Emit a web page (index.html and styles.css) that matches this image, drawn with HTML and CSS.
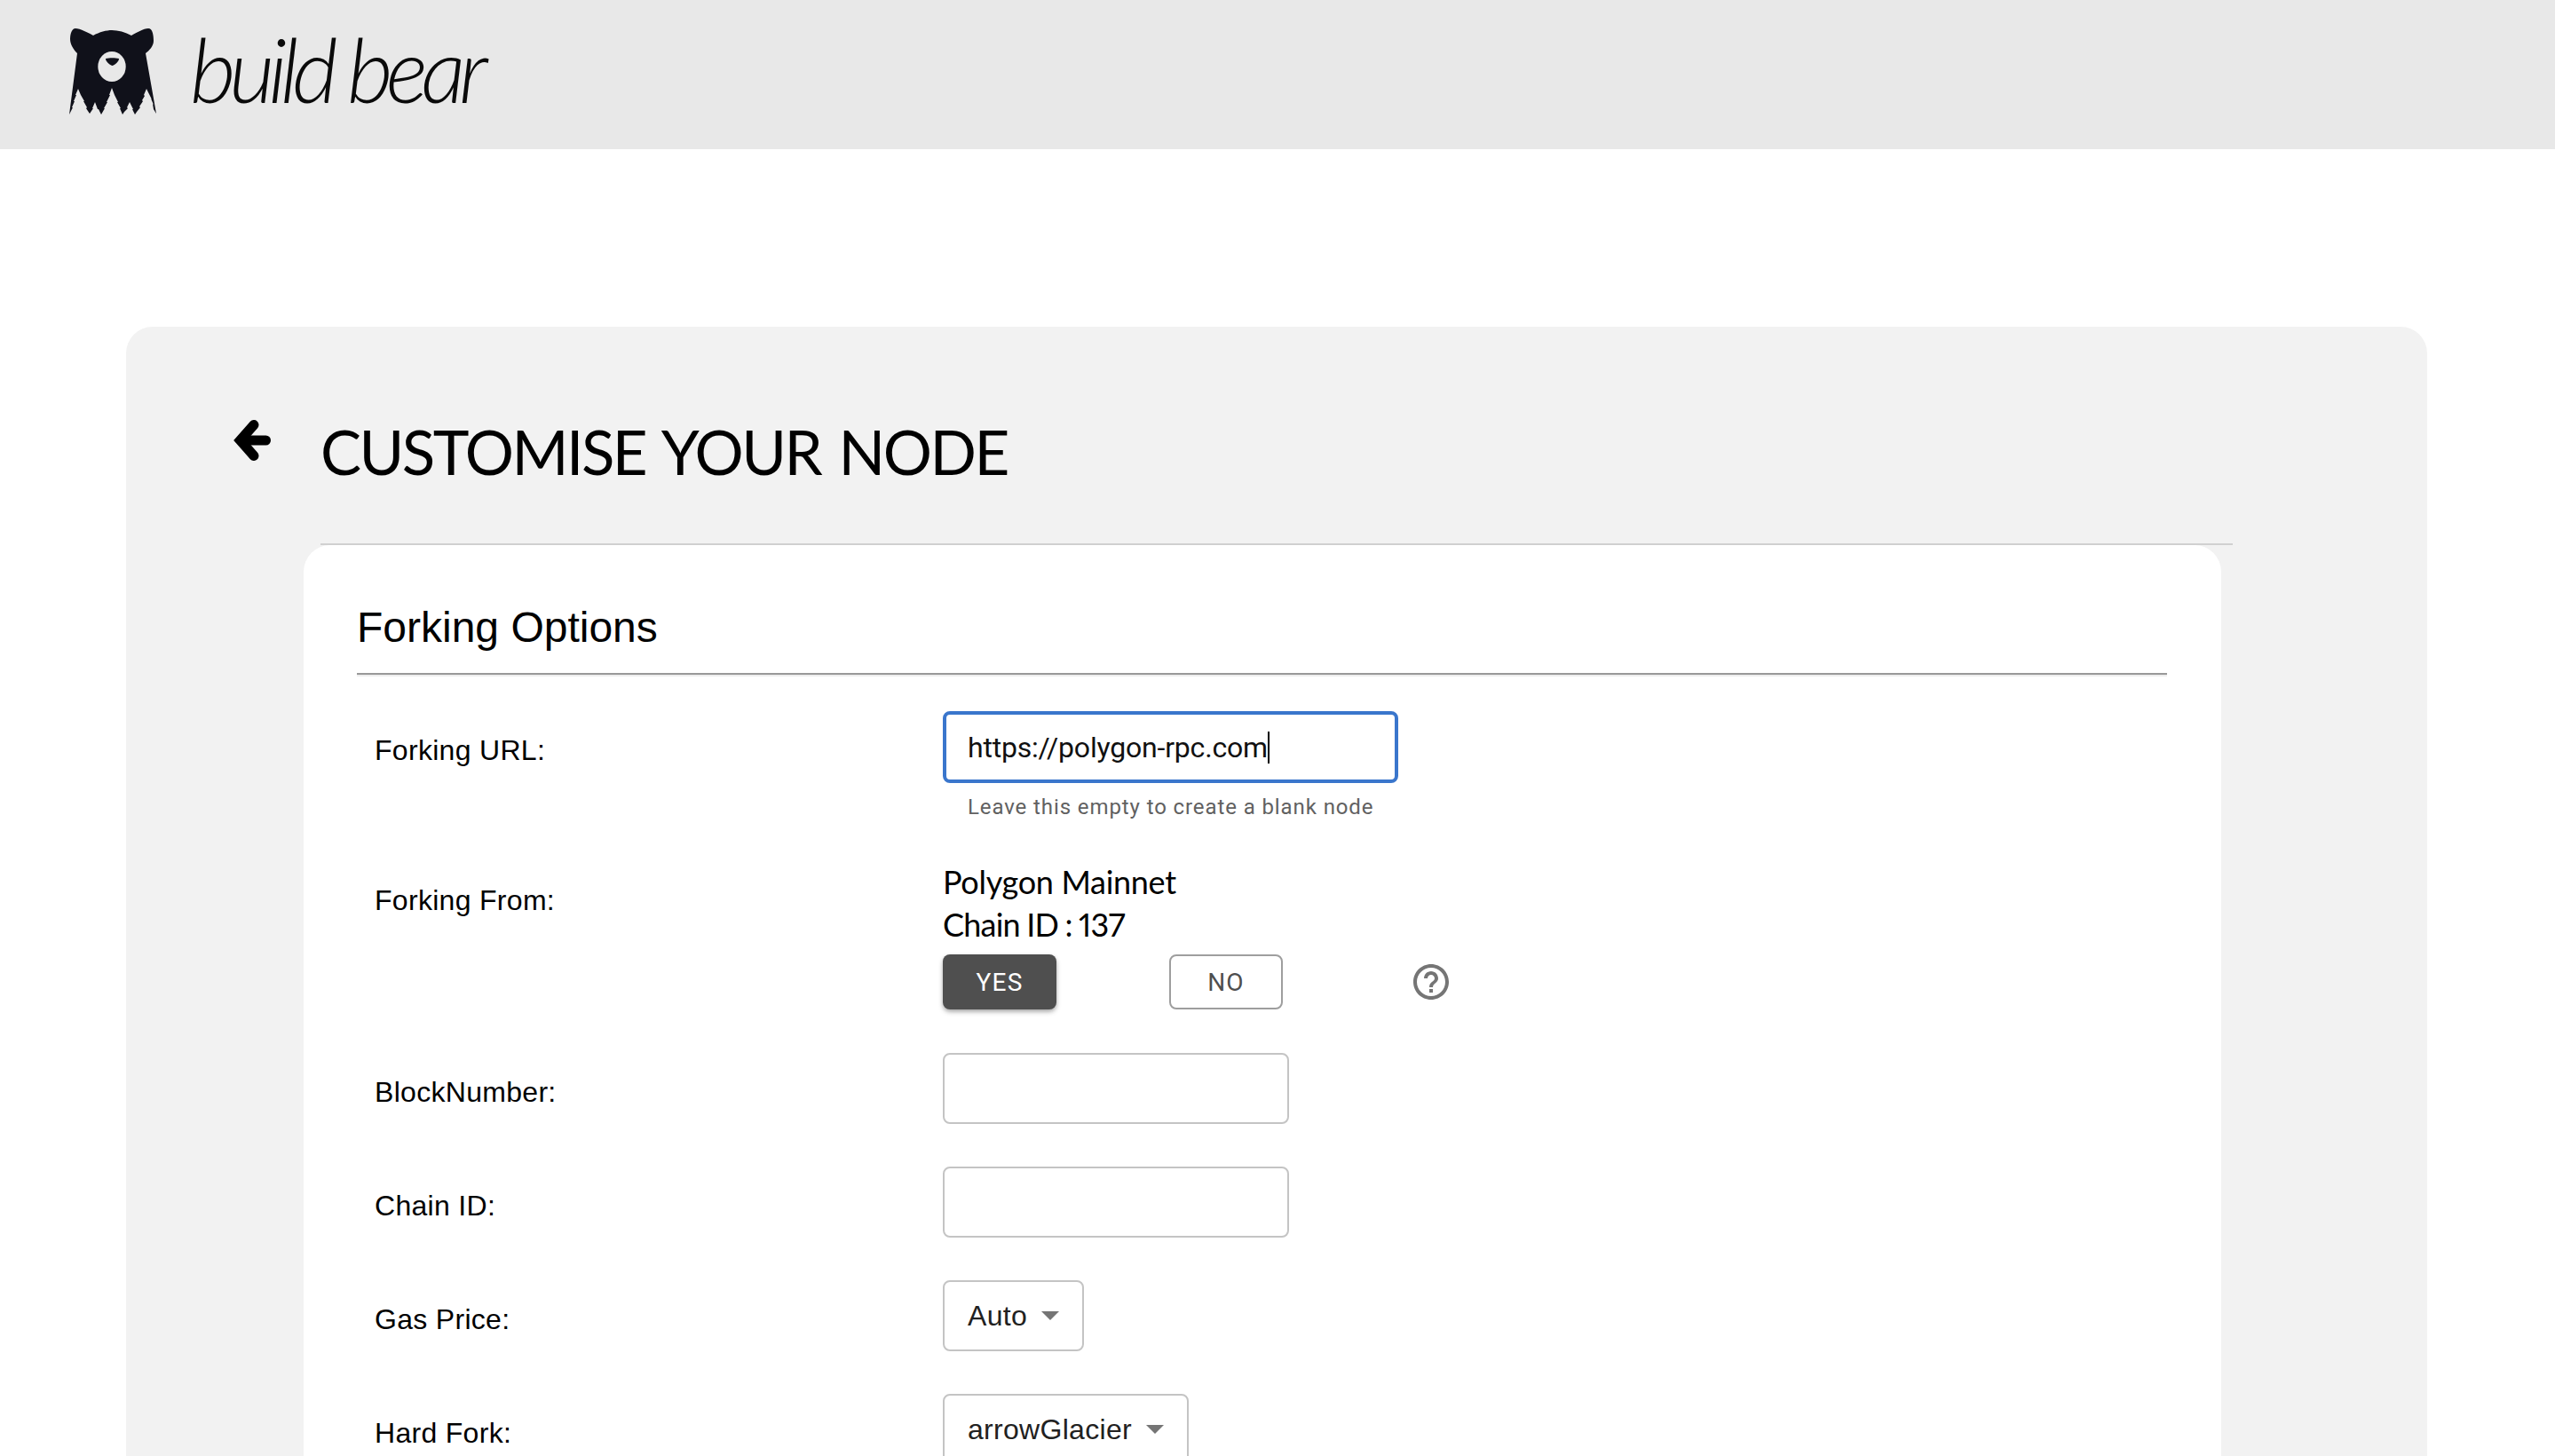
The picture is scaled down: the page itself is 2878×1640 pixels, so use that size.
FILE: index.html
```html
<!DOCTYPE html>
<html lang="en">
<head>
<meta charset="utf-8">
<title>BuildBear</title>
<link rel="stylesheet" href="styles.css">
</head>
<body>
<div class="page">
  <header class="topbar">
    <svg class="bear" viewBox="0 0 140 120" aria-label="BuildBear logo">
      <path class="bear-body" d="M25 12C30 12 40 17 45 20C52 16 60 14 66 14C73 14 81 16 88 20C93 17 102 12 107 12C112 12 113 20 113 26C113 32 108 37 104 40L116 108L113 103L112 97L113 98L110 91L111 92L108 86L105 80L102 87L103 88L100 93L101 94L97 100L98 101L94 106L92 109L89 103L90 103L86 95L83 101L84 102L80 106L78 109L75 102L76 102L72 95L73 95L69 87L66 79L63 87L64 87L60 95L61 95L57 102L58 102L54 109L51 103L50 103L47 95L44 102L45 102L41 108L37 102L38 101L34 94L35 94L31 87L28 80L25 87L26 87L23 94L24 94L21 101L22 101L18 109L27 40C23 36 19 30 19 24C19 18 21 12 25 12Z"/>
      <ellipse class="bear-face" cx="66" cy="55" rx="15.7" ry="17"/>
      <path class="bear-body" d="M59 46C63 45 70 45 74 46C74 49 70 53 66.500 54C63 53 59 49 59 46Z"/>
    </svg>
    <span class="wordmark">build bear</span>
  </header>
  <main class="panel">
    <div class="title-row">
      <svg class="back" viewBox="12 13 44 46" aria-label="Back">
        <path class="back-head" d="M36 18.500L20.500 36L36 53.500"/>
        <path class="back-stem" d="M25 36H49.500"/>
      </svg>
      <h1 class="title">CUSTOMISE YOUR NODE</h1>
    </div>
    <div class="title-rule"></div>
    <section class="card">
      <h2 class="card-title">Forking Options</h2>
      <div class="card-rule"></div>
      <div class="row row-url">
        <div class="label">Forking URL:</div>
        <div class="control">
          <div class="field field-focus"><span>https://polygon-rpc.com</span><span class="caret"></span></div>
          <p class="helper">Leave this empty to create a blank node</p>
        </div>
      </div>
      <div class="row row-from">
        <div class="label">Forking From:</div>
        <div class="control">
          <div class="chain">Polygon Mainnet</div>
          <div class="chain chain-id">Chain ID : 137</div>
          <div class="choice">
            <button class="btn btn-on" type="button">YES</button>
            <button class="btn btn-off" type="button">NO</button>
            <svg class="help" viewBox="0 0 24 24" aria-label="Help"><path d="M11 18h2v-2h-2v2zm1-16C6.480 2 2 6.480 2 12s4.480 10 10 10 10-4.480 10-10S17.520 2 12 2zm0 18c-4.410 0-8-3.590-8-8s3.590-8 8-8 8 3.590 8 8-3.590 8-8 8zm0-14c-2.210 0-4 1.790-4 4h2c0-1.100.900-2 2-2s2 .900 2 2c0 2-3 1.750-3 5h2c0-2.250 3-2.500 3-5 0-2.210-1.790-4-4-4z"/></svg>
          </div>
        </div>
      </div>
      <div class="row">
        <div class="label">BlockNumber:</div>
        <div class="control"><div class="field field-plain"></div></div>
      </div>
      <div class="row">
        <div class="label">Chain ID:</div>
        <div class="control"><div class="field field-plain"></div></div>
      </div>
      <div class="row">
        <div class="label">Gas Price:</div>
        <div class="control"><div class="select"><span>Auto</span><span class="arrow"></span></div></div>
      </div>
      <div class="row">
        <div class="label">Hard Fork:</div>
        <div class="control"><div class="select"><span>arrowGlacier</span><span class="arrow"></span></div></div>
      </div>
    </section>
  </main>
</div>
</body>
</html>
```
FILE: styles.css
```css
html, body {
  margin: 0;
  padding: 0;
  background: #fff;
}
.page {
  height: 100vh;
  overflow: hidden;
  font-family: "Liberation Sans", Arial, sans-serif;
  color: #000;
}
.topbar {
  height: 168px;
  background: #e8e8e8;
  display: flex;
  align-items: flex-start;
  padding-left: 60px;
}
.bear {
  width: 140px;
  height: 120px;
  margin-top: 20px;
  flex: none;
}
.bear-body { fill: #10111a; }
.bear-face { fill: #e8e8e8; }
.wordmark {
  font-family: Lato, sans-serif;
  font-style: italic;
  font-weight: 300;
  font-size: 100px;
  line-height: 120px;
  letter-spacing: -7.5px;
  margin: 17px 0 0 14px;
  color: #0a0a0a;
}
.panel {
  margin: 200px 0 0 142px;
  width: 2592px;
  height: 1400px;
  box-sizing: border-box;
  padding-top: 105px;
  background: #f2f2f2;
  border-radius: 30px 30px 0 0;
}
.title-row {
  display: flex;
  align-items: flex-start;
  height: 139px;
  padding-left: 120px;
}
.back {
  width: 44px;
  height: 46px;
  flex: none;
}
.back-head, .back-stem {
  fill: none;
  stroke: #000;
  stroke-width: 11;
}
.back-head {
  stroke-linecap: round;
  stroke-linejoin: miter;
}
.back-stem { stroke-linecap: round; }
.title {
  margin: -9px 0 0 55px;
  font-family: Lato, sans-serif;
  font-weight: 400;
  font-size: 69px;
  line-height: 90px;
  letter-spacing: -2.5px;
  word-spacing: 5px;
  color: #000;
}
.title-rule {
  width: 2154px;
  height: 2px;
  margin-left: 219px;
  background: #d0d0d0;
}
.card {
  width: 2160px;
  margin-left: 200px;
  min-height: 1100px;
  box-sizing: border-box;
  padding: 0 60px;
  background: #fff;
  border-radius: 30px 30px 0 0;
}
.card-title {
  margin: 0;
  padding-top: 65px;
  font-size: 48px;
  font-weight: 400;
  line-height: 56px;
}
.card-rule {
  width: 2039px;
  height: 2px;
  margin-top: 23px;
  background: #999;
  box-shadow: 0 2px 0 #eee;
}
.row {
  display: grid;
  grid-template-columns: 640px 1fr;
  padding-left: 20px;
  margin-bottom: 48px;
}
.row-url {
  margin-top: 41px;
  margin-bottom: 40px;
}
.row-from {
  margin-bottom: 49px;
}
.label {
  font-size: 32px;
  line-height: 40px;
  padding-top: 24px;
  letter-spacing: 0.3px;
}
.row-from .label { padding-top: 25px; }
.field {
  box-sizing: border-box;
  height: 80px;
  background: #fff;
  border: 2px solid #c4c4c4;
  border-radius: 8px;
  width: 390px;
}
.field-focus {
  width: 513px;
  height: 81px;
  border: 4px solid #3a76cc;
  display: flex;
  align-items: center;
  padding: 0 0 0 24px;
  font-family: Roboto, sans-serif;
  font-size: 32px;
  letter-spacing: -0.2px;
  color: #111;
}
.caret {
  width: 2px;
  height: 36px;
  background: #000;
}
.helper {
  margin: 7px 0 0 28px;
  font-family: Roboto, sans-serif;
  font-size: 24px;
  line-height: 40px;
  letter-spacing: 0.9px;
  color: #616161;
}
.chain {
  font-family: Lato, sans-serif;
  font-size: 36px;
  line-height: 48px;
  letter-spacing: -0.3px;
  color: #000;
}
.chain-id {
  letter-spacing: -0.8px;
  word-spacing: -1px;
  font-variant-numeric: proportional-nums;
}
.choice {
  display: flex;
  align-items: center;
  margin-top: 10px;
}
.btn {
  width: 128px;
  height: 62px;
  box-sizing: border-box;
  border-radius: 8px;
  font-family: Roboto, sans-serif;
  font-weight: 400;
  font-size: 28px;
  letter-spacing: 1.2px;
  padding: 0;
}
.btn-on {
  background: #4f4f4f;
  color: #fff;
  border: 0;
  box-shadow: 0 3px 6px -1px rgba(0,0,0,.3), 0 2px 4px rgba(0,0,0,.14);
}
.btn-off {
  margin-left: 127px;
  background: #fff;
  color: #4f4f4f;
  border: 2px solid #9e9e9e;
}
.help {
  width: 48px;
  height: 48px;
  margin-left: 143px;
  fill: #757575;
}
.select {
  box-sizing: border-box;
  display: inline-flex;
  align-items: center;
  height: 80px;
  padding: 0 26px;
  border: 2px solid #c4c4c4;
  border-radius: 8px;
  font-size: 32px;
  letter-spacing: 0.3px;
  color: #212121;
}
.arrow {
  margin-left: 16px;
  width: 0;
  height: 0;
  border-left: 10px solid transparent;
  border-right: 10px solid transparent;
  border-top: 10px solid #757575;
}
```
